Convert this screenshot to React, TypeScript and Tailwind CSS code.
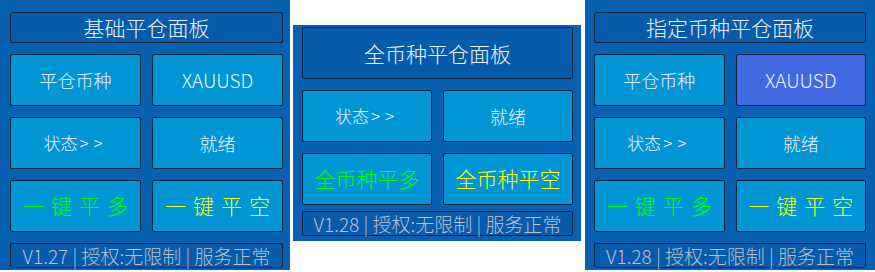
import React from "react";

const font = { fontFamily: '"Noto Sans CJK SC", "Noto Sans", sans-serif' };

function Btn({
  children,
  className = "",
}: {
  children: React.ReactNode;
  className?: string;
}) {
  return (
    <div
      className={`h-[52px] flex items-center justify-center border border-[#0d2238] rounded-[2px] ${className}`}
    >
      {children}
    </div>
  );
}

function Footer({ v }: { v: string }) {
  return (
    <div className="h-[25px] flex items-center justify-center border border-[#0d2238] rounded-[2px] bg-[#075bab] text-[#b7c0cc] text-[19px] font-light leading-none whitespace-nowrap">
      V{v} | 授权:无限制 | 服务正常
    </div>
  );
}

function Status() {
  return (
    <Btn className="bg-[#0096d6] text-[#eef4fa] text-[17px] font-light">
      <span>
        状态<span className="tracking-[5px] pl-[2px]">&gt;&gt;</span>
      </span>
    </Btn>
  );
}

export default function App() {
  return (
    <div className="w-[875px] h-[272px] bg-white flex items-start" style={font}>
      {/* Panel 1 */}
      <div className="w-[290px] h-[270px] bg-[#0760b2] pl-[10px] pr-[7px] pt-[12px] flex flex-col">
        <div className="h-[31px] flex items-center justify-center border border-[#0d2238] rounded-[2px] bg-[#075bab] text-[#eef2f6] text-[21px] font-light leading-none">
          基础平仓面板
        </div>
        <div className="grid grid-cols-2 gap-x-[11px] gap-y-[11px] mt-[11px]">
          <Btn className="bg-[#0096d6] text-[#eef4fa] text-[18px] font-light">平仓币种</Btn>
          <Btn className="bg-[#0096d6] text-[#eef4fa] text-[19px] font-light">XAUUSD</Btn>
          <Status />
          <Btn className="bg-[#0096d6] text-[#eef4fa] text-[18px] font-light">就绪</Btn>
          <Btn className="bg-[#0096d6] text-[#00ff00] text-[21px] font-light tracking-[7px]">
            <span className="pl-[7px]">一键平多</span>
          </Btn>
          <Btn className="bg-[#0096d6] text-[#ffff00] text-[21px] font-light tracking-[7px]">
            <span className="pl-[7px]">一键平空</span>
          </Btn>
        </div>
        <div className="mt-[11px]">
          <Footer v="1.27" />
        </div>
      </div>

      {/* Panel 2 */}
      <div className="ml-[3px] mt-[25px] w-[288px] h-[216px] bg-[#0760b2] pl-[9px] pr-[8px] pt-[2px] flex flex-col">
        <div className="h-[52px] flex items-center justify-center border border-[#0d2238] rounded-[2px] bg-[#075bab] text-[#eef2f6] text-[21px] font-light leading-none">
          全币种平仓面板
        </div>
        <div className="grid grid-cols-2 gap-x-[11px] gap-y-[11px] mt-[11px]">
          <Status />
          <Btn className="bg-[#0096d6] text-[#eef4fa] text-[18px] font-light">就绪</Btn>
          <Btn className="bg-[#0096d6] text-[#00ff00] text-[21px] font-light">全币种平多</Btn>
          <Btn className="bg-[#0096d6] text-[#ffff00] text-[21px] font-light">全币种平空</Btn>
        </div>
        <div className="mt-[6px]">
          <Footer v="1.28" />
        </div>
      </div>

      {/* Panel 3 */}
      <div className="ml-[4px] w-[290px] h-[270px] bg-[#0760b2] pl-[9px] pr-[9px] pt-[12px] flex flex-col">
        <div className="h-[31px] flex items-center justify-center border border-[#0d2238] rounded-[2px] bg-[#075bab] text-[#eef2f6] text-[21px] font-light leading-none">
          指定币种平仓面板
        </div>
        <div className="grid grid-cols-2 gap-x-[11px] gap-y-[11px] mt-[11px]">
          <Btn className="bg-[#0096d6] text-[#eef4fa] text-[18px] font-light">平仓币种</Btn>
          <Btn className="bg-[#4169e1] text-[#eef4fa] text-[19px] font-light">XAUUSD</Btn>
          <Status />
          <Btn className="bg-[#0096d6] text-[#eef4fa] text-[18px] font-light">就绪</Btn>
          <Btn className="bg-[#0096d6] text-[#00ff00] text-[21px] font-light tracking-[7px]">
            <span className="pl-[7px]">一键平多</span>
          </Btn>
          <Btn className="bg-[#0096d6] text-[#ffff00] text-[21px] font-light tracking-[7px]">
            <span className="pl-[7px]">一键平空</span>
          </Btn>
        </div>
        <div className="mt-[11px]">
          <Footer v="1.28" />
        </div>
      </div>
    </div>
  );
}
